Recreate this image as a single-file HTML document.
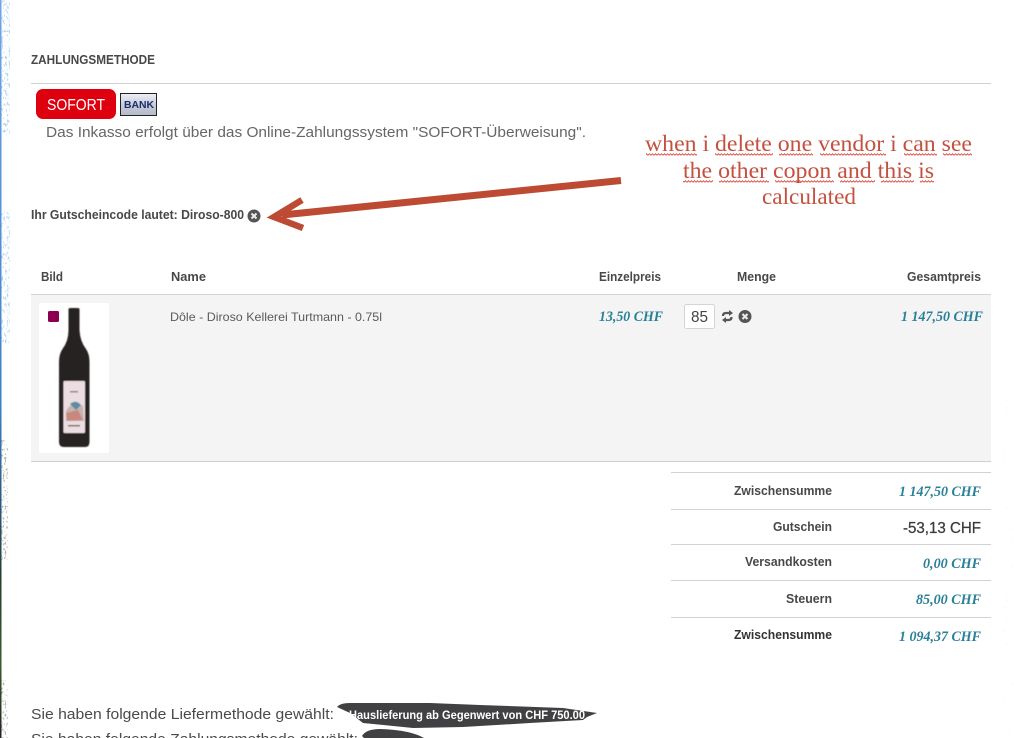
<!DOCTYPE html>
<html lang="de"><head><meta charset="utf-8"><title>Zahlungsmethode</title>
<style>
html,body{margin:0;padding:0;background:#fff;width:1014px;height:738px;overflow:hidden}
svg{display:block}
text{font-family:"Liberation Sans",sans-serif}
.h{font-weight:700;font-size:12.5px;fill:#484848}
.p{font-family:"Liberation Serif",serif;font-weight:700;font-style:italic;font-size:14.5px;fill:#2a8099}
.l{font-weight:700;font-size:12.5px;fill:#484848}
.a{font-family:"Liberation Serif",serif;font-size:23.5px;fill:#c5503f}
</style></head><body>
<svg width="1014" height="738" viewBox="0 0 1014 738" xmlns="http://www.w3.org/2000/svg">
<defs>
<filter id="sp" x="0" y="0" width="100%" height="100%"><feTurbulence type="fractalNoise" baseFrequency=".55 .3" numOctaves="2" seed="4"/><feColorMatrix values="0 0 0 0 .45  0 0 0 0 .65  0 0 0 0 .9  0 0 0 7 -3.9"/></filter>
<filter id="sg" x="0" y="0" width="100%" height="100%"><feTurbulence type="fractalNoise" baseFrequency=".6 .35" numOctaves="2" seed="9"/><feColorMatrix values="0 0 0 0 .45  0 0 0 0 .47  0 0 0 0 .43  0 0 0 7 -3.9"/></filter>
<filter id="sr" x="0" y="0" width="100%" height="100%"><feTurbulence type="fractalNoise" baseFrequency=".5 .3" numOctaves="2" seed="15"/><feColorMatrix values="0 0 0 0 .65  0 0 0 0 .67  0 0 0 0 .67  0 0 0 4 -2.9"/></filter>
<filter id="bl" x="-5%" y="-5%" width="110%" height="110%"><feGaussianBlur stdDeviation=".45"/></filter>
<linearGradient id="bk" x1="0" y1="0" x2="0" y2="1"><stop offset="0" stop-color="#eef0f6"/><stop offset=".5" stop-color="#c8cddb"/><stop offset="1" stop-color="#b4bac9"/></linearGradient>
<linearGradient id="ed" x1="0" y1="0" x2="0" y2="1"><stop offset="0" stop-color="#6ea6e6"/><stop offset=".55" stop-color="#3f7fc4"/><stop offset=".68" stop-color="#2a5a80"/><stop offset=".78" stop-color="#24402c"/><stop offset=".9" stop-color="#3d5a30"/><stop offset="1" stop-color="#222"/></linearGradient>
<pattern id="wv" width="3" height="3" patternUnits="userSpaceOnUse"><path d="M0 2.300 L1.500 .7 L3 2.300" fill="none" stroke="#d9362c" stroke-width=".8"/></pattern>
</defs>

<!-- textured page edges -->
<rect x="0" y="0" width="10" height="135" filter="url(#sp)"/>
<rect x="0" y="210" width="10" height="135" filter="url(#sp)"/>
<rect x="0" y="440" width="8" height="120" filter="url(#sg)"/>
<rect x="0" y="680" width="8" height="58" filter="url(#sg)"/>
<rect x="1003" y="400" width="10" height="338" filter="url(#sr)"/>
<rect x="0" y="0" width="1.5" height="738" fill="url(#ed)"/>

<!-- payment method -->
<text class="h" x="31" y="64" textLength="124" lengthAdjust="spacingAndGlyphs">ZAHLUNGSMETHODE</text>
<rect x="31" y="83" width="960" height="1" fill="#d0d0d0"/>
<rect x="36" y="89" width="80" height="30" rx="7" fill="#df000f"/>
<text x="47" y="110" font-size="15.500" fill="#fff" textLength="58" lengthAdjust="spacingAndGlyphs">SOFORT</text>
<rect x="120.500" y="93.500" width="36" height="22" fill="url(#bk)" stroke="#222"/>
<text x="124" y="108" font-size="10" font-weight="700" fill="#1d2d68" textLength="30" lengthAdjust="spacingAndGlyphs">BANK</text>
<text x="46" y="137" font-size="15" fill="#666" textLength="540" lengthAdjust="spacingAndGlyphs">Das Inkasso erfolgt über das Online-Zahlungssystem "SOFORT-Überweisung".</text>

<!-- annotation -->
<text class="a" x="645" y="151" textLength="327" lengthAdjust="spacingAndGlyphs">when i delete one vendor i can see</text>
<text class="a" x="683" y="178" textLength="251" lengthAdjust="spacingAndGlyphs">the other copon and this is</text>
<text class="a" x="762" y="204" textLength="94" lengthAdjust="spacingAndGlyphs">calculated</text>
<g fill="url(#wv)">
<rect x="646" y="153" width="51" height="3"/><rect x="715" y="153" width="58" height="3"/><rect x="779" y="153" width="34" height="3"/><rect x="820" y="153" width="66" height="3"/><rect x="904" y="153" width="33" height="3"/><rect x="943" y="153" width="29" height="3"/>
<rect x="683" y="180" width="30" height="3"/><rect x="719" y="180" width="50" height="3"/><rect x="775" y="180" width="59" height="3"/><rect x="840" y="180" width="35" height="3"/><rect x="881" y="180" width="33" height="3"/><rect x="920" y="180" width="14" height="3"/>
</g>
<path d="M621 180.500 L282 215" stroke="#bd4a33" stroke-width="7" fill="none"/>
<path d="M302 200 L274 217 L303 228" stroke="#bd4a33" stroke-width="6.500" fill="none" stroke-linejoin="miter"/>

<!-- coupon -->
<text class="h" x="31" y="219" textLength="213" lengthAdjust="spacingAndGlyphs">Ihr Gutscheincode lautet: Diroso-800</text>
<circle cx="254" cy="216" r="6.500" fill="#555"/>
<path d="M251.500 213.500l5 5m0-5l-5 5" stroke="#eee" stroke-width="2" fill="none"/>

<!-- table header -->
<text class="h" x="41" y="281" textLength="22" lengthAdjust="spacingAndGlyphs">Bild</text>
<text class="h" x="171" y="281" textLength="35" lengthAdjust="spacingAndGlyphs">Name</text>
<text class="h" x="599" y="281" textLength="62" lengthAdjust="spacingAndGlyphs">Einzelpreis</text>
<text class="h" x="737" y="281" textLength="39" lengthAdjust="spacingAndGlyphs">Menge</text>
<text class="h" x="907" y="281" textLength="74" lengthAdjust="spacingAndGlyphs">Gesamtpreis</text>

<!-- row -->
<rect x="31" y="294" width="960" height="168" fill="#f4f4f4"/>
<rect x="31" y="294" width="960" height="1" fill="#d4d4d4"/>
<rect x="31" y="461" width="960" height="1" fill="#d0d0d0"/>
<rect x="39" y="303" width="70" height="150" rx="1" fill="#fff"/>
<rect x="48" y="311" width="11" height="11" rx="1.500" fill="#8c0050"/>
<g filter="url(#bl)">
<path d="M68.500 309 Q68.500 308 71 308 H77 Q79.500 308 79.500 309 V330 Q80 341 86 349 Q89.500 354 89.500 362 V442 Q89.500 447 85 447 H64 Q59 447 59 442 V362 Q59 354 62.500 349 Q68.500 341 68.500 330 Z" fill="#262022"/>
<rect x="63.500" y="381" width="21.500" height="52" rx="1" fill="#ebdde2"/>
<path d="M66 411 Q72 400 83 406 L84 421 H66 Z" fill="#c6b4b0"/>
<path d="M70 404 Q76 399 81 405 L76 410 Z" fill="#5a8ea2"/>
<path d="M66 413 L78 410 L83 420 L67 421 Z" fill="#c9887e"/>
<rect x="68" y="425" width="12" height="1.500" fill="#765"/>
<rect x="70" y="391" width="8" height="1.500" fill="#887"/>
</g>
<text x="170" y="321" font-size="12" fill="#5a5a5a" textLength="212" lengthAdjust="spacingAndGlyphs">Dôle - Diroso Kellerei Turtmann - 0.75l</text>
<text class="p" x="599" y="321" textLength="64" lengthAdjust="spacingAndGlyphs">13,50 CHF</text>
<rect x="684.500" y="304.500" width="30" height="24" rx="2" fill="#fff" stroke="#d4d4d4"/>
<text x="691" y="322" font-size="16" fill="#444" textLength="17" lengthAdjust="spacingAndGlyphs">85</text>
<path d="M723 316 Q723 313 726 313 H729 M731.500 317 Q731.500 320 728.500 320 H726" stroke="#555" stroke-width="2.300" fill="none"/>
<path d="M729 310 L733 313 L729 316 Z M726 317 L722 320 L726 323 Z" fill="#555"/>
<circle cx="745" cy="316.500" r="6.500" fill="#555"/>
<path d="M742.500 314l5 5m0-5l-5 5" stroke="#eee" stroke-width="2" fill="none"/>
<text class="p" x="901" y="321" textLength="82" lengthAdjust="spacingAndGlyphs">1 147,50 CHF</text>

<!-- totals -->
<g fill="#d2d2d2">
<rect x="671" y="472" width="320" height="1"/>
<rect x="671" y="509" width="320" height="1"/>
<rect x="671" y="544" width="320" height="1"/>
<rect x="671" y="580" width="320" height="1"/>
<rect x="671" y="617" width="320" height="1"/>
</g>
<text class="l" x="734" y="495" textLength="98" lengthAdjust="spacingAndGlyphs">Zwischensumme</text>
<text class="l" x="773" y="531" textLength="59" lengthAdjust="spacingAndGlyphs">Gutschein</text>
<text class="l" x="745" y="566" textLength="87" lengthAdjust="spacingAndGlyphs">Versandkosten</text>
<text class="l" x="786" y="603" textLength="46" lengthAdjust="spacingAndGlyphs">Steuern</text>
<text class="l" x="734" y="639" textLength="98" lengthAdjust="spacingAndGlyphs" style="fill:#333">Zwischensumme</text>
<text class="p" x="899" y="496" textLength="82" lengthAdjust="spacingAndGlyphs">1 147,50 CHF</text>
<text x="903" y="533" font-size="15.500" fill="#3a3a3a" stroke="#3a3a3a" stroke-width=".25" textLength="78" lengthAdjust="spacingAndGlyphs">-53,13 CHF</text>
<text class="p" x="923" y="568" textLength="58" lengthAdjust="spacingAndGlyphs">0,00 CHF</text>
<text class="p" x="916" y="604" textLength="65" lengthAdjust="spacingAndGlyphs">85,00 CHF</text>
<text class="p" x="899" y="641" textLength="82" lengthAdjust="spacingAndGlyphs">1 094,37 CHF</text>

<!-- bottom -->
<text x="31" y="719" font-size="15" fill="#4a4a4a" textLength="303" lengthAdjust="spacingAndGlyphs">Sie haben folgende Liefermethode gewählt:</text>
<path d="M337 707 Q340 703 350 703 L430 703 L480 705 L563 708 L597 713 L587 717 L583 720 L530 723 L463 727 L413 728 L363 723 L350 713 Z" fill="#414042"/>
<text x="349" y="719" font-size="12" font-weight="700" fill="#fff" textLength="236" lengthAdjust="spacingAndGlyphs">Hauslieferung ab Gegenwert von CHF 750.00</text>
<text x="31" y="744" font-size="15" fill="#4a4a4a" textLength="327" lengthAdjust="spacingAndGlyphs">Sie haben folgende Zahlungsmethode gewählt:</text>
<path d="M362 736 Q366 729 380 729 Q410 730 424 738 H364 Z" fill="#414042"/>
</svg>
</body></html>
